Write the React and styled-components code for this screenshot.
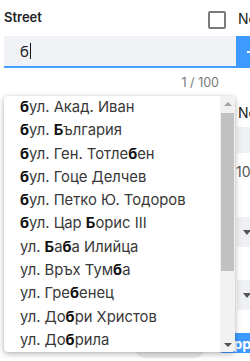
import React from "react";
import styled, { createGlobalStyle } from "styled-components";

const GlobalStyle = createGlobalStyle`
  html, body {
    margin: 0;
    padding: 0;
    background: #fff;
    overflow: hidden;
  }
  body {
    font-family: Inter, "Noto Sans", sans-serif;
    color: #333;
  }
`;

const Page = styled.div`
  position: relative;
  width: 250px;
  height: 361px;
  padding-left: 4px;
  box-sizing: border-box;
  overflow: hidden;
`;

const Columns = styled.div`
  display: grid;
  grid-template-columns: 232px 150px;
`;

const LeftCol = styled.div`
  position: relative;
  display: flex;
  flex-direction: column;
`;

const RightCol = styled.div`
  display: flex;
  flex-direction: column;
`;

const Header = styled.div`
  height: 36px;
  display: flex;
  align-items: center;
  justify-content: space-between;
  padding-right: 10px;
  box-sizing: border-box;
`;

const Label = styled.div`
  font-size: 13px;
  font-weight: 600;
  color: #222;
  margin-top: -2px;
`;

const Checkbox = styled.div`
  width: 18px;
  height: 18px;
  box-sizing: border-box;
  border: 2px solid #7a7a7a;
  border-radius: 2px;
  margin-top: 4px;
`;

const SideText = styled.div`
  height: 36px;
  display: flex;
  align-items: center;
  padding-left: 2px;
  font-size: 14px;
  color: #222;
  white-space: nowrap;
`;

const InputBox = styled.div`
  height: 30px;
  background: #f1f2f6;
  border-bottom: 2px solid #42a0ff;
  display: flex;
  align-items: center;
  padding-left: 16px;
  font-size: 15px;
  color: #222;
`;

const Caret = styled.span`
  display: inline-block;
  width: 1px;
  height: 16px;
  background: #111;
  margin-left: 1px;
`;

const Counter = styled.div`
  text-align: right;
  padding-right: 17px;
  margin-top: 7px;
  font-size: 12.5px;
  color: #777;
`;

const AddButton = styled.div`
  width: 44px;
  height: 32px;
  background: #3d9bff;
  border-radius: 0 4px 4px 0;
  display: flex;
  align-items: center;
  padding-left: 11px;
  box-sizing: border-box;
`;

const Plus = styled.span`
  position: relative;
  width: 12px;
  height: 2px;
  background: #fff;
  &::after {
    content: "";
    position: absolute;
    left: 5px;
    top: -5px;
    width: 2px;
    height: 12px;
    background: #fff;
  }
`;

const SmallLabel = styled.div`
  margin-top: ${(p) => p.$top}px;
  padding-left: 2px;
  font-size: 14px;
  color: #222;
  line-height: 12px;
  white-space: nowrap;
`;

const GreyField = styled.div`
  margin-top: ${(p) => p.$top}px;
  margin-left: 1px;
  height: ${(p) => p.$h}px;
  background: #eef0f4;
  display: flex;
  align-items: center;
  padding-left: 6px;
`;

const Arrow = styled.span`
  width: 0;
  height: 0;
  border-left: 4px solid transparent;
  border-right: 4px solid transparent;
  border-top: 5px solid #555;
`;

const Value = styled.div`
  margin-top: 13px;
  font-size: 14px;
  color: #555;
  line-height: 12px;
`;

const Footer = styled.div`
  position: absolute;
  top: 333px;
  left: 135px;
  display: flex;
  gap: 8px;
`;

const FooterButton = styled.div`
  height: ${(p) => (p.$primary ? 20 : 25)}px;
  width: ${(p) => (p.$primary ? 90 : 70)}px;
  border-radius: 10px;
  background: ${(p) => (p.$primary ? "#3d9bff" : "#ececee")};
  color: #fff;
  font-weight: 700;
  font-size: 14px;
  display: flex;
  align-items: center;
  padding-left: 10px;
  box-sizing: border-box;
`;

const Dropdown = styled.div`
  position: absolute;
  top: 96px;
  left: 0;
  width: 231px;
  height: 256px;
  background: #fff;
  border-radius: 4px;
  box-shadow: 0 2px 6px rgba(0, 0, 0, 0.28), 0 0 2px rgba(0, 0, 0, 0.12);
  overflow: hidden;
  display: flex;
  z-index: 2;
`;

const List = styled.div`
  flex: 1;
  min-width: 0;
`;

const Item = styled.div`
  height: 23.3px;
  line-height: 23.3px;
  padding-left: 16px;
  font-size: 14.8px;
  color: #383838;
  white-space: nowrap;
  overflow: hidden;
`;

const Match = styled.b`
  font-weight: 700;
  color: #111;
`;

const Scrollbar = styled.div`
  width: 15px;
  flex: none;
  background: #f1f1f1;
  display: flex;
  flex-direction: column;
  align-items: center;
`;

const ScrollArrow = styled.div`
  height: 15px;
  display: flex;
  align-items: center;
  justify-content: center;
  &::before {
    content: "";
    border-left: 4px solid transparent;
    border-right: 4px solid transparent;
    ${(p) =>
      p.$up
        ? "border-bottom: 4px solid #a3a3a3;"
        : "border-top: 4px solid #505050;"}
  }
`;

const ScrollTrack = styled.div`
  flex: 1;
  width: 100%;
  padding: 2px 1px 0;
  box-sizing: border-box;
`;

const Thumb = styled.div`
  height: 158px;
  background: #c1c1c1;
`;

const streets = [
  "бул. Акад. Иван",
  "бул. България",
  "бул. Ген. Тотлебен",
  "бул. Гоце Делчев",
  "бул. Петко Ю. Тодоров",
  "бул. Цар Борис III",
  "ул. Баба Илийца",
  "ул. Връх Тумба",
  "ул. Гребенец",
  "ул. Добри Христов",
  "ул. Добрила",
];

const highlight = (text) =>
  text.split(/([бБ])/).map((part, i) =>
    /^[бБ]$/.test(part) ? <Match key={i}>{part}</Match> : part
  );

const App = () => {
  return (
    <Page>
      <GlobalStyle />
      <Columns>
        <LeftCol>
          <Header>
            <Label>Street</Label>
            <Checkbox />
          </Header>
          <InputBox>
            б<Caret />
          </InputBox>
          <Counter>1 / 100</Counter>
          <Dropdown>
            <List>
              {streets.map((s) => (
                <Item key={s}>{highlight(s)}</Item>
              ))}
            </List>
            <Scrollbar>
              <ScrollArrow $up />
              <ScrollTrack>
                <Thumb />
              </ScrollTrack>
              <ScrollArrow />
            </Scrollbar>
          </Dropdown>
        </LeftCol>
        <RightCol>
          <SideText>New street</SideText>
          <AddButton>
            <Plus />
          </AddButton>
          <SmallLabel $top={39}>No.</SmallLabel>
          <GreyField $top={8} $h={26} />
          <Value>10</Value>
          <GreyField $top={39} $h={30}>
            <Arrow />
          </GreyField>
          <GreyField $top={33} $h={30}>
            <Arrow />
          </GreyField>
        </RightCol>
      </Columns>
      <Footer>
        <FooterButton />
        <FooterButton $primary>Apply</FooterButton>
      </Footer>
    </Page>
  );
};

export default App;
